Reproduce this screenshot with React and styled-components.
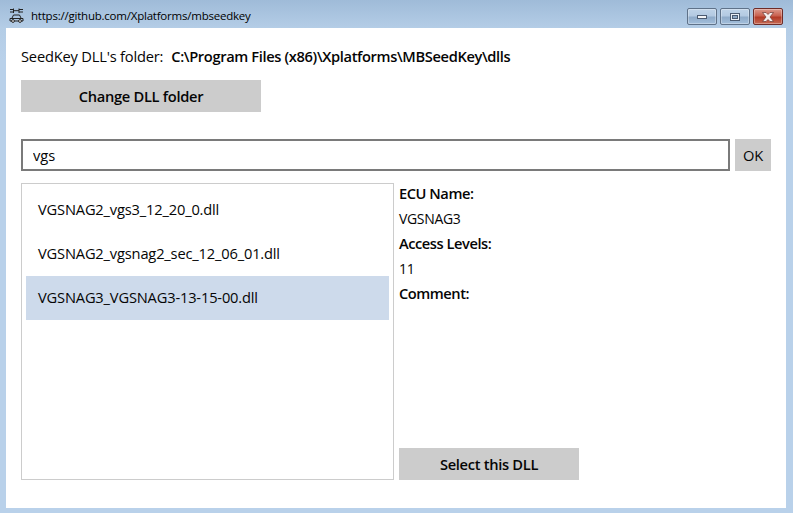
import styled, { createGlobalStyle } from 'styled-components';

const GlobalStyle = createGlobalStyle`
  html, body {
    margin: 0;
    padding: 0;
    background: #b9d1ea;
  }
  body {
    font-family: 'Open Sans', 'Noto Sans', sans-serif;
    color: #050505;
  }
`;

const Window = styled.div`
  width: 793px;
  height: 513px;
  display: flex;
  flex-direction: column;
  overflow: hidden;
  background: linear-gradient(180deg, #9fbbd8 0, #b4cde6 28px, #b9d1ea 60px);
`;

const TitleBar = styled.div`
  height: 28px;
  flex: none;
  display: flex;
  align-items: center;
  padding: 3px 10px 0 9px;
  box-sizing: border-box;
`;

const TitleText = styled.span`
  margin-left: 7px;
  font-size: 11.5px;
  letter-spacing: -0.22px;
  color: #000;
  flex: 1;
`;

const Controls = styled.div`
  display: flex;
  gap: 3px;
  align-self: flex-start;
  margin-top: 5px;
`;

const Control = styled.div`
  width: 30px;
  height: 17px;
  box-sizing: border-box;
  border: 1px solid ${(p) => (p.$close ? '#6e2c28' : '#5f7289')};
  border-radius: 2px;
  display: flex;
  align-items: center;
  justify-content: center;
  background: ${(p) =>
    p.$close
      ? 'linear-gradient(180deg, #dc9a8d 0, #c9614f 45%, #b33a26 55%, #c66a55 100%)'
      : 'linear-gradient(180deg, #bfd3e8 0, #b3cae2 45%, #8fabc9 55%, #a3bfdc 100%)'};
  box-shadow: inset 0 0 0 1px rgba(255, 255, 255, 0.3);
`;

const Content = styled.main`
  flex: 1;
  margin: 0 7px 5px 6px;
  background: #fff;
  padding: 18px 15px 28px;
  display: flex;
  flex-direction: column;
  min-height: 0;
`;

const FolderRow = styled.div`
  display: flex;
  align-items: center;
  height: 20px;
  font-size: 14.67px;
  letter-spacing: -0.19px;
`;

const FolderPath = styled.strong`
  margin-left: 8px;
  font-weight: 600;
  letter-spacing: -0.36px;
`;

const GrayButton = styled.button`
  width: ${(p) => p.$width}px;
  height: 32px;
  flex: none;
  padding: 0;
  border: 0;
  background: #cccccc;
  color: #050505;
  font-family: inherit;
  font-size: 14.67px;
  font-weight: ${(p) => (p.$plain ? 400 : 600)};
  letter-spacing: ${(p) => (p.$plain ? '-0.3px' : '-0.3px')};
`;

const ChangeRow = styled.div`
  margin-top: 14px;
`;

const SearchRow = styled.div`
  margin-top: 27px;
  display: flex;
  gap: 5px;
`;

const SearchInput = styled.input`
  width: 709px;
  height: 32px;
  box-sizing: border-box;
  border: 2px solid #7a7a7a;
  outline: 0;
  padding: 0 10px;
  font-family: inherit;
  font-size: 14.67px;
  color: #050505;
`;

const Columns = styled.div`
  margin-top: 12px;
  flex: 1;
  display: flex;
  gap: 5px;
  min-height: 0;
`;

const List = styled.ul`
  width: 373px;
  box-sizing: border-box;
  margin: 0;
  padding: 4px;
  list-style: none;
  border: 1px solid #cccccc;
`;

const ListItem = styled.li`
  height: 44px;
  display: flex;
  align-items: center;
  padding: 0 0 2px 12px;
  box-sizing: border-box;
  font-size: 14.67px;
  letter-spacing: -0.17px;
  background: ${(p) => (p.$selected ? '#cddaeb' : 'transparent')};
`;

const Details = styled.section`
  flex: 1;
  display: flex;
  flex-direction: column;
`;

const DetailLine = styled.div`
  height: 25px;
  line-height: ${(p) => (p.$label ? '21px' : '22px')};
  font-size: ${(p) => (p.$label ? '14.67px' : '14px')};
  letter-spacing: ${(p) => (p.$label ? '-0.46px' : '-0.34px')};
  font-weight: ${(p) => (p.$label ? 600 : 400)};
`;

const SelectRow = styled.div`
  margin-top: auto;
`;

const CarIcon = () => (
  <svg width="15" height="15" viewBox="0 0 15 15" fill="none" stroke="#222" strokeWidth="1">
    <path d="M1 1.500h3.500M1 4h3.500M4.500 .5v4.500M4.500 2.700h5.500M10 .5v4.500M10 1.500h4M10 4h4" />
    <path d="M3 10l1.500-3h6L12 10" />
    <path d="M1 10.500h13v2.500h-13z" />
    <circle cx="4" cy="13" r="1.400" fill="#fff" />
    <circle cx="11" cy="13" r="1.400" fill="#fff" />
  </svg>
);

const MinimizeGlyph = () => (
  <svg width="12" height="6" viewBox="0 0 12 6">
    <rect x="1.500" y="1.500" width="9" height="3" fill="#f2f4f7" stroke="#4a5a70" />
  </svg>
);

const MaximizeGlyph = () => (
  <svg width="12" height="10" viewBox="0 0 12 10">
    <rect x="1.500" y="1.500" width="9" height="7" fill="#e9eef5" stroke="#4a5a70" />
    <rect x="3.500" y="3.500" width="5" height="3" fill="#8fa9c6" stroke="#4a5a70" />
  </svg>
);

const CloseGlyph = () => (
  <svg width="14" height="10" viewBox="0 0 14 10">
    <path
      d="M1.500 .5h3.500l2 2 2-2h3.500L9 5l3.500 4.500H9L7 7.500l-2 2H1.500L5 5z"
      fill="#f4eeee"
      stroke="#6e3a34"
      strokeWidth="0.7"
    />
  </svg>
);

const dlls = [
  { name: 'VGSNAG2_vgs3_12_20_0.dll' },
  { name: 'VGSNAG2_vgsnag2_sec_12_06_01.dll' },
  { name: 'VGSNAG3_VGSNAG3-13-15-00.dll', selected: true },
];

export default function App() {
  return (
    <Window>
      <GlobalStyle />
      <TitleBar>
        <CarIcon />
        <TitleText>https://github.com/Xplatforms/mbseedkey</TitleText>
        <Controls>
          <Control>
            <MinimizeGlyph />
          </Control>
          <Control>
            <MaximizeGlyph />
          </Control>
          <Control $close>
            <CloseGlyph />
          </Control>
        </Controls>
      </TitleBar>
      <Content>
        <FolderRow>
          SeedKey DLL's folder:
          <FolderPath>C:\Program Files (x86)\Xplatforms\MBSeedKey\dlls</FolderPath>
        </FolderRow>
        <ChangeRow>
          <GrayButton $width={240}>Change DLL folder</GrayButton>
        </ChangeRow>
        <SearchRow>
          <SearchInput defaultValue="vgs" />
          <GrayButton $width={36} $plain>
            OK
          </GrayButton>
        </SearchRow>
        <Columns>
          <List>
            {dlls.map((dll) => (
              <ListItem key={dll.name} $selected={dll.selected}>
                {dll.name}
              </ListItem>
            ))}
          </List>
          <Details>
            <DetailLine $label>ECU Name:</DetailLine>
            <DetailLine>VGSNAG3</DetailLine>
            <DetailLine $label>Access Levels:</DetailLine>
            <DetailLine>11</DetailLine>
            <DetailLine $label>Comment:</DetailLine>
            <SelectRow>
              <GrayButton $width={180}>Select this DLL</GrayButton>
            </SelectRow>
          </Details>
        </Columns>
      </Content>
    </Window>
  );
}
